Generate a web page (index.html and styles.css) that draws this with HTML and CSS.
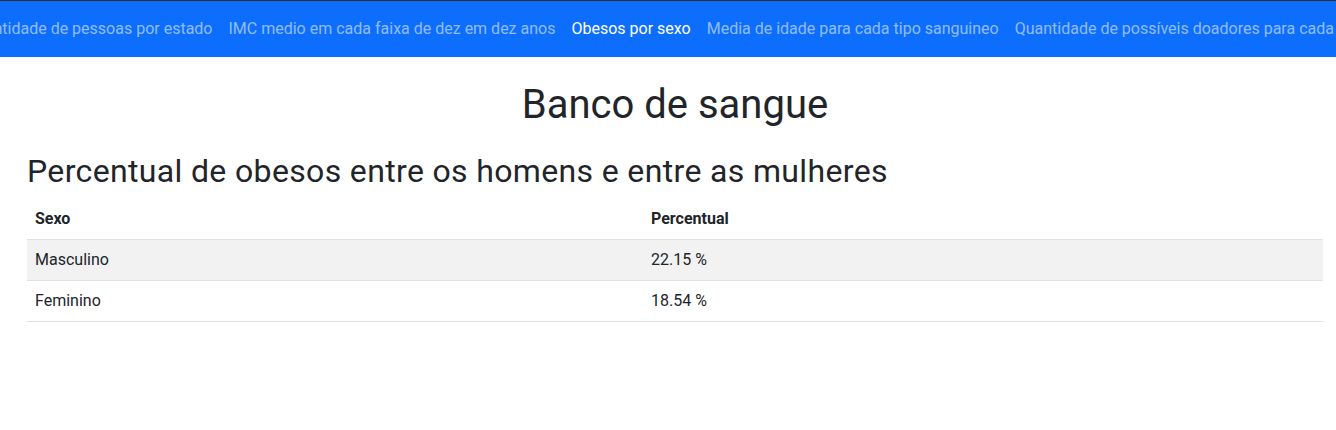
FILE: index.html
```html
<!DOCTYPE html>
<html lang="pt-br">
<head>
<meta charset="utf-8">
<title>Banco de sangue</title>
<link rel="stylesheet" href="styles.css">
</head>
<body>
<nav class="navbar">
  <ul class="nav-list">
    <li><a class="nav-link" href="#">Quantidade de pessoas por estado</a></li>
    <li><a class="nav-link" href="#">IMC medio em cada faixa de dez em dez anos</a></li>
    <li><a class="nav-link active" href="#">Obesos por sexo</a></li>
    <li><a class="nav-link" href="#">Media de idade para cada tipo sanguineo</a></li>
    <li><a class="nav-link" href="#">Quantidade de possíveis doadores para cada tipo sanguineo</a></li>
  </ul>
</nav>
<main class="content">
  <h1 class="title">Banco de sangue</h1>
  <h2 class="subtitle">Percentual de obesos entre os homens e entre as mulheres</h2>
  <table class="data-table">
    <thead>
      <tr><th class="col-sexo">Sexo</th><th>Percentual</th></tr>
    </thead>
    <tbody>
      <tr class="striped"><td>Masculino</td><td>22.15 %</td></tr>
      <tr><td>Feminino</td><td>18.54 %</td></tr>
    </tbody>
  </table>
</main>
</body>
</html>
```
FILE: styles.css
```css
*{box-sizing:border-box}
html,body{margin:0;padding:0}
body{font-family:Roboto,"Liberation Sans",sans-serif;font-size:16px;line-height:1.5;color:#212529;background:#fff}
.navbar{background:#0d6efd;border-top:1px solid #2d2d2d;padding:8px 0 8px 72px;display:flex;justify-content:center;overflow:hidden}
.nav-list{list-style:none;margin:0;padding:0;display:flex;flex-wrap:nowrap;justify-content:center;flex-shrink:0}
.nav-list li{flex-shrink:0;white-space:nowrap}
.nav-link{display:block;padding:8px 8px;color:rgba(255,255,255,.55);text-decoration:none}
.nav-link.active{color:#fff}
.content{padding:0 13px 0 27px}
.title{margin:24px 0 8px;font-size:40px;font-weight:400;line-height:1.2;text-align:center}
.subtitle{margin:23px 0 9px;font-size:32px;font-weight:400;line-height:1.2;letter-spacing:.35px}
.data-table{width:100%;border-collapse:collapse}
.data-table th,.data-table td{padding:8px;text-align:left;border-bottom:1px solid #dee2e6;vertical-align:top}
.data-table th{font-weight:700}
.col-sexo{width:616px}
.striped td{background:#f2f2f2}
```
